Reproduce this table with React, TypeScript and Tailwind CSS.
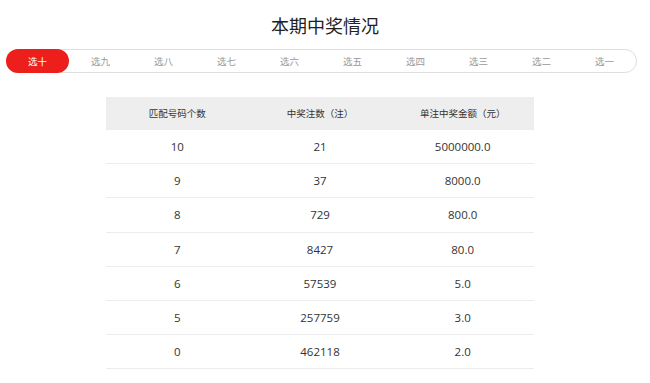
const tabs = ["选十", "选九", "选八", "选七", "选六", "选五", "选四", "选三", "选二", "选一"]

const rows = [
  ["10", "21", "5000000.0"],
  ["9", "37", "8000.0"],
  ["8", "729", "800.0"],
  ["7", "8427", "80.0"],
  ["6", "57539", "5.0"],
  ["5", "257759", "3.0"],
  ["0", "462118", "2.0"],
]

function App() {
  return (
    <div className="w-[650px] h-[383px] bg-white overflow-hidden font-['Open_Sans','Noto_Sans_CJK_SC',sans-serif]">
      <h1 className="mt-[13px] h-[24px] leading-[24px] text-center text-[18px] text-[#222] font-normal font-['Noto_Sans_CJK_SC',sans-serif]">
        本期中奖情况
      </h1>

      <div className="mt-[12px] ml-[6px] w-[631px] h-[24px] flex border border-[#dedede] rounded-full">
        {tabs.map((t, i) => (
          <div
            key={t}
            className={
              i === 0
                ? "w-[63px] -my-px -ml-px h-[24px] flex items-center justify-center rounded-full bg-[#ec1f1c] text-white text-[9.5px] font-['Noto_Sans_CJK_SC',sans-serif]"
                : "flex-1 flex items-center justify-center text-[#999] text-[9.5px] font-['Noto_Sans_CJK_SC',sans-serif]"
            }
          >
            {t}
          </div>
        ))}
      </div>

      <div className="mt-[24px] ml-[106px] w-[428px]">
        <div className="grid grid-cols-3 h-[33px] bg-[#eeeeee] items-center text-center text-[9.5px] text-[#333] font-['Noto_Sans_CJK_SC',sans-serif]">
          <div>匹配号码个数</div>
          <div>中奖注数（注）</div>
          <div>单注中奖金额（元）</div>
        </div>
        {rows.map((r) => (
          <div key={r[0]} className="grid grid-cols-3 h-[34.2px] border-b border-[#ececec] items-center text-center text-[11.5px] text-[#333]">
            <div>{r[0]}</div>
            <div>{r[1]}</div>
            <div>{r[2]}</div>
          </div>
        ))}
      </div>
    </div>
  )
}

export default App
